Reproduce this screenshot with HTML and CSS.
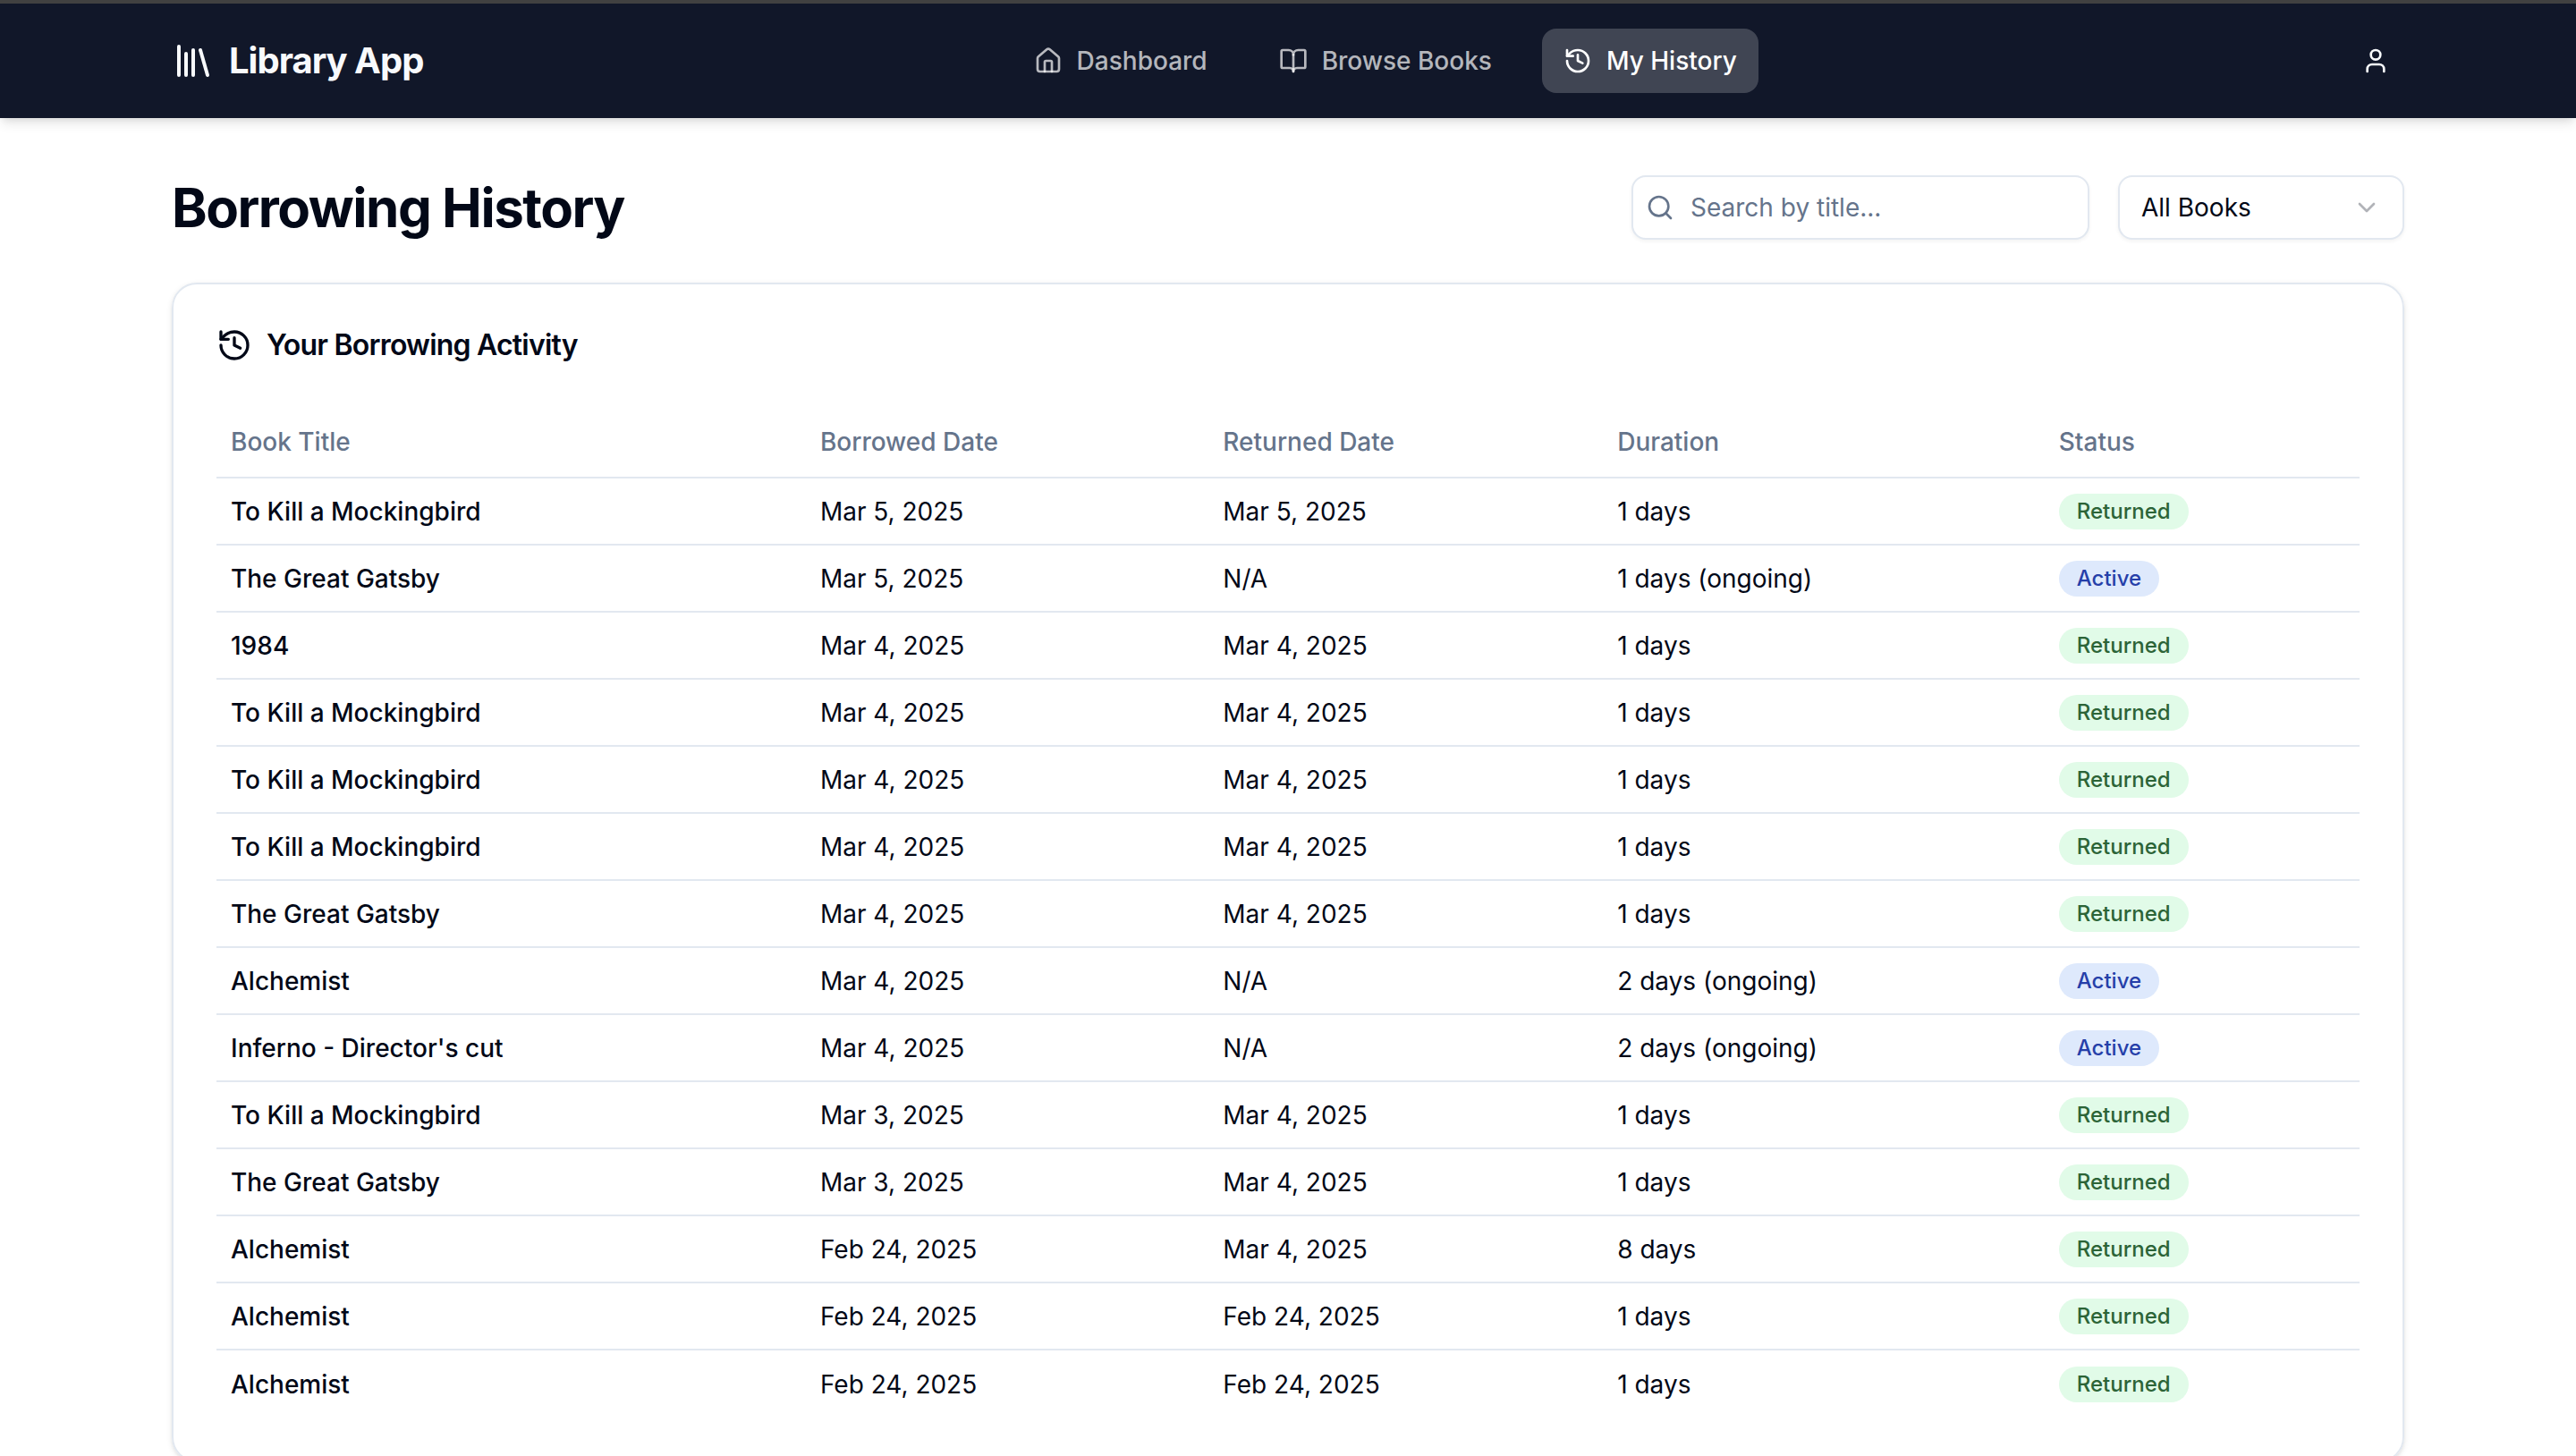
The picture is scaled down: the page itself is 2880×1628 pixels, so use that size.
FILE: index.html
```html
<!DOCTYPE html>
<html lang="en">
<head>
<meta charset="utf-8">
<meta name="viewport" content="width=device-width, initial-scale=1">
<title>Borrowing History - Library App</title>
<link rel="stylesheet" href="styles.css">
</head>
<body>
<svg class="sprite" aria-hidden="true">
  <symbol id="history" viewBox="0 0 24 24"><path d="M3 12a9 9 0 1 0 9-9 9.75 9.75 0 0 0-6.74 2.74L3 8"/><path d="M3 3v5h5"/><path d="M12 7v5l4 2"/></symbol>
</svg>
<header class="topbar">
  <a class="brand" href="#">
    <svg class="icon icon-lg" viewBox="0 0 24 24" aria-hidden="true"><path d="m16 6 4 14"/><path d="M12 6v14"/><path d="M8 8v12"/><path d="M4 4v16"/></svg>
    <span>Library App</span>
  </a>
  <nav class="nav">
    <a class="nav-link" href="#">
      <svg class="icon" viewBox="0 0 24 24" aria-hidden="true"><path d="M15 21v-8a1 1 0 0 0-1-1h-4a1 1 0 0 0-1 1v8"/><path d="M3 10a2 2 0 0 1 .709-1.528l7-5.999a2 2 0 0 1 2.582 0l7 5.999A2 2 0 0 1 21 10v9a2 2 0 0 1-2 2H5a2 2 0 0 1-2-2z"/></svg>
      Dashboard
    </a>
    <a class="nav-link" href="#">
      <svg class="icon" viewBox="0 0 24 24" aria-hidden="true"><path d="M12 7v14"/><path d="M3 18a1 1 0 0 1-1-1V4a1 1 0 0 1 1-1h5a4 4 0 0 1 4 4 4 4 0 0 1 4-4h5a1 1 0 0 1 1 1v13a1 1 0 0 1-1 1h-6a3 3 0 0 0-3 3 3 3 0 0 0-3-3z"/></svg>
      Browse Books
    </a>
    <a class="nav-link active" href="#" aria-current="page">
      <svg class="icon" aria-hidden="true"><use href="#history"/></svg>
      My History
    </a>
  </nav>
  <button class="user-button" type="button" aria-label="Account">
    <svg class="icon" viewBox="0 0 24 24" aria-hidden="true"><path d="M19 21v-2a4 4 0 0 0-4-4H9a4 4 0 0 0-4 4v2"/><circle cx="12" cy="7" r="4"/></svg>
  </button>
</header>
<main class="page">
  <div class="page-head">
    <h1>Borrowing History</h1>
    <div class="filters">
      <div class="search">
        <svg class="icon" viewBox="0 0 24 24" aria-hidden="true"><circle cx="11" cy="11" r="8"/><path d="m21 21-4.3-4.3"/></svg>
        <input class="field" type="text" placeholder="Search by title..." aria-label="Search by title">
      </div>
      <div class="filter">
        <select class="field" aria-label="Filter books">
          <option>All Books</option>
          <option>Active</option>
          <option>Returned</option>
        </select>
        <svg class="icon" viewBox="0 0 24 24" aria-hidden="true"><path d="m6 9 6 6 6-6"/></svg>
      </div>
    </div>
  </div>
  <section class="card">
    <h2><svg class="icon icon-md" aria-hidden="true"><use href="#history"/></svg>Your Borrowing Activity</h2>
    <table>
      <colgroup><col class="col-title"><col class="col-borrowed"><col class="col-returned"><col class="col-duration"><col class="col-status"></colgroup>
      <thead>
        <tr><th scope="col">Book Title</th><th scope="col">Borrowed Date</th><th scope="col">Returned Date</th><th scope="col">Duration</th><th scope="col">Status</th></tr>
      </thead>
      <tbody>
        <tr><td class="title">To Kill a Mockingbird</td><td>Mar 5, 2025</td><td>Mar 5, 2025</td><td>1 days</td><td><span class="badge returned">Returned</span></td></tr>
        <tr><td class="title">The Great Gatsby</td><td>Mar 5, 2025</td><td>N/A</td><td>1 days (ongoing)</td><td><span class="badge ongoing">Active</span></td></tr>
        <tr><td class="title">1984</td><td>Mar 4, 2025</td><td>Mar 4, 2025</td><td>1 days</td><td><span class="badge returned">Returned</span></td></tr>
        <tr><td class="title">To Kill a Mockingbird</td><td>Mar 4, 2025</td><td>Mar 4, 2025</td><td>1 days</td><td><span class="badge returned">Returned</span></td></tr>
        <tr><td class="title">To Kill a Mockingbird</td><td>Mar 4, 2025</td><td>Mar 4, 2025</td><td>1 days</td><td><span class="badge returned">Returned</span></td></tr>
        <tr><td class="title">To Kill a Mockingbird</td><td>Mar 4, 2025</td><td>Mar 4, 2025</td><td>1 days</td><td><span class="badge returned">Returned</span></td></tr>
        <tr><td class="title">The Great Gatsby</td><td>Mar 4, 2025</td><td>Mar 4, 2025</td><td>1 days</td><td><span class="badge returned">Returned</span></td></tr>
        <tr><td class="title">Alchemist</td><td>Mar 4, 2025</td><td>N/A</td><td>2 days (ongoing)</td><td><span class="badge ongoing">Active</span></td></tr>
        <tr><td class="title">Inferno - Director's cut</td><td>Mar 4, 2025</td><td>N/A</td><td>2 days (ongoing)</td><td><span class="badge ongoing">Active</span></td></tr>
        <tr><td class="title">To Kill a Mockingbird</td><td>Mar 3, 2025</td><td>Mar 4, 2025</td><td>1 days</td><td><span class="badge returned">Returned</span></td></tr>
        <tr><td class="title">The Great Gatsby</td><td>Mar 3, 2025</td><td>Mar 4, 2025</td><td>1 days</td><td><span class="badge returned">Returned</span></td></tr>
        <tr><td class="title">Alchemist</td><td>Feb 24, 2025</td><td>Mar 4, 2025</td><td>8 days</td><td><span class="badge returned">Returned</span></td></tr>
        <tr><td class="title">Alchemist</td><td>Feb 24, 2025</td><td>Feb 24, 2025</td><td>1 days</td><td><span class="badge returned">Returned</span></td></tr>
        <tr><td class="title">Alchemist</td><td>Feb 24, 2025</td><td>Feb 24, 2025</td><td>1 days</td><td><span class="badge returned">Returned</span></td></tr>
      </tbody>
    </table>
  </section>
</main>
</body>
</html>
```
FILE: styles.css
```css
:root {
  --ink: #020817;
  --navy: #111729;
  --muted: #65748b;
  --line: #e2e8f0;
  --gutter: 192px;
}

* { box-sizing: border-box; }

html { scrollbar-width: none; }

body {
  margin: 0;
  background: #fff;
  color: var(--ink);
  font-family: Inter, "Liberation Sans", sans-serif;
  font-size: 28px;
  line-height: 40px;
}

a { color: inherit; text-decoration: none; }

.sprite { display: none; }

.icon {
  flex: none;
  width: 32px;
  height: 32px;
  fill: none;
  stroke: currentColor;
  stroke-width: 2;
  stroke-linecap: round;
  stroke-linejoin: round;
}
.icon-md { width: 40px; height: 40px; }
.icon-lg { width: 48px; height: 48px; }

/* Headings and the brand share one tight tracking */
.brand, h1, h2 { letter-spacing: -0.025em; }

/* Top bar */
.topbar {
  display: flex;
  align-items: center;
  justify-content: space-between;
  height: 132px;
  padding: 0 var(--gutter);
  border-top: 4px solid #414141;
  background: var(--navy);
  color: #f8fafc;
  box-shadow: 0 8px 12px -2px rgb(0 0 0 / 10%), 0 4px 8px -4px rgb(0 0 0 / 10%);
}

.brand {
  display: flex;
  align-items: center;
  gap: 16px;
  font-size: 40px;
  font-weight: 700;
}

.nav { display: flex; gap: 32px; }

.nav-link {
  display: flex;
  align-items: center;
  gap: 16px;
  padding: 16px 24px;
  border-radius: 16px;
  color: rgb(255 255 255 / 70%);
  font-weight: 500;
}
.nav-link.active { background: rgb(255 255 255 / 20%); color: #fff; }

.user-button {
  display: grid;
  place-items: center;
  width: 64px;
  height: 64px;
  padding: 0;
  border: 0;
  border-radius: 50%;
  background: none;
  color: inherit;
}

/* Page heading and filters */
.page { padding: 64px var(--gutter); }

.page-head {
  display: flex;
  align-items: center;
  justify-content: space-between;
  margin-bottom: 48px;
}

h1 {
  margin: 0;
  font-size: 60px;
  font-weight: 700;
  line-height: 72px;
}

.filters { display: flex; gap: 32px; }

.search, .filter {
  position: relative;
  display: flex;
  align-items: center;
}
.search { width: 512px; }
.filter { width: 320px; }
.search .icon { position: absolute; left: 16px; color: var(--muted); }
.filter .icon { position: absolute; right: 26px; opacity: .3; pointer-events: none; }

.field {
  width: 100%;
  height: 72px;
  padding: 0 24px;
  border: 2px solid var(--line);
  border-radius: 16px;
  background: #fff;
  color: var(--ink);
  font: inherit;
  box-shadow: 0 2px 4px rgb(0 0 0 / 5%);
  appearance: none;
}
.search .field { padding-left: 64px; }
.field::placeholder { color: var(--muted); opacity: 1; }

/* Activity card */
.card {
  padding: 48px;
  border: 2px solid var(--line);
  border-radius: 28px;
  box-shadow: 0 2px 6px rgb(0 0 0 / 10%), 0 2px 4px -2px rgb(0 0 0 / 10%);
}

h2 {
  display: flex;
  align-items: center;
  gap: 16px;
  margin: 0 0 48px;
  font-size: 32px;
  font-weight: 600;
  line-height: 40px;
}

table {
  width: 100%;
  border-collapse: separate;
  border-spacing: 0;
  table-layout: fixed;
}
.col-title { width: 27.5%; }
.col-borrowed { width: 18.8%; }
.col-returned { width: 18.4%; }
.col-duration { width: 20.6%; }
.col-status { width: 14.7%; }

th, td {
  height: 75px;
  padding: 0 16px;
  border-bottom: 2px solid var(--line);
  text-align: left;
  vertical-align: middle;
}
th { height: 81px; color: var(--muted); font-weight: 500; }
tbody tr:last-child td { border-bottom: 0; }
.title { font-weight: 500; }

.badge {
  display: block;
  width: fit-content;
  padding: 4px 20px;
  border-radius: 20px;
  font-size: 24px;
  font-weight: 500;
  line-height: 32px;
}
.returned { background: #e1fbe8; color: #2c6437; }
.ongoing { background: #dee9fc; color: #263fa9; }
```
